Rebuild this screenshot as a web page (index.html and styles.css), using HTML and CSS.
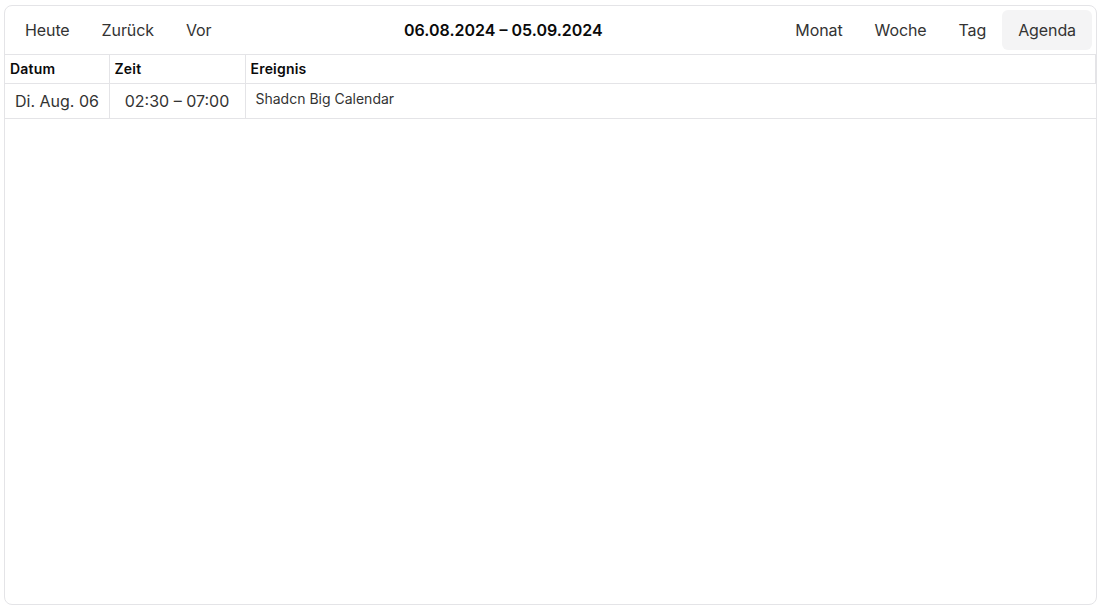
FILE: index.html
```html
<!DOCTYPE html>
<html lang="de">
<head>
<meta charset="utf-8">
<title>Agenda</title>
<link rel="stylesheet" href="styles.css">
</head>
<body>
<div class="page">
  <div class="calendar">
    <div class="toolbar">
      <div class="btn-group">
        <button class="btn">Heute</button>
        <button class="btn">Zurück</button>
        <button class="btn">Vor</button>
      </div>
      <div class="label">06.08.2024 – 05.09.2024</div>
      <div class="btn-group">
        <button class="btn">Monat</button>
        <button class="btn">Woche</button>
        <button class="btn">Tag</button>
        <button class="btn active">Agenda</button>
      </div>
    </div>
    <table class="agenda">
      <thead>
        <tr>
          <th class="col-date">Datum</th>
          <th class="col-time">Zeit</th>
          <th class="col-event">Ereignis</th>
        </tr>
      </thead>
      <tbody>
        <tr>
          <td class="cell-date">Di. Aug. 06</td>
          <td class="cell-time">02:30 – 07:00</td>
          <td class="cell-event">Shadcn Big Calendar</td>
        </tr>
      </tbody>
    </table>
  </div>
</div>
</body>
</html>
```

FILE: styles.css
```css
* { box-sizing: border-box; }
html, body { margin: 0; padding: 0; background: #ffffff; }
body {
  font-family: Inter, "Noto Sans", sans-serif;
  color: #333333;
}
.page {
  padding: 5px 5px 4px 4px;
}
.calendar {
  width: 1093px;
  height: 600px;
  border: 1px solid #e4e4e7;
  border-radius: 8px;
  background: #ffffff;
  display: flex;
  flex-direction: column;
  overflow: hidden;
}
.toolbar {
  display: flex;
  align-items: center;
  padding: 4px;
  border-bottom: 1px solid #e4e4e7;
}
.btn-group {
  display: flex;
}
.btn {
  font-family: inherit;
  font-size: 16px;
  letter-spacing: -0.1px;
  color: #333333;
  background: transparent;
  border: none;
  height: 40px;
  padding: 0 16px;
  border-radius: 6px;
  cursor: pointer;
}
.btn.active {
  background: #f4f4f5;
}
.label {
  flex: 1;
  text-align: center;
  font-size: 16px;
  font-weight: 600;
  color: #0a0a0a;
}
.agenda {
  width: 100%;
  border-collapse: collapse;
  table-layout: fixed;
}
.agenda th {
  text-align: left;
  font-size: 14px;
  font-weight: 600;
  letter-spacing: 0.2px;
  color: #0a0a0a;
  height: 28px;
  padding: 0 5px;
  border-bottom: 1px solid #e4e4e7;
  border-right: 1px solid #e4e4e7;
}
.agenda td {
  height: 35px;
  border-bottom: 1px solid #e4e4e7;
  border-right: 1px solid #e4e4e7;
  padding: 0 10px;
  white-space: nowrap;
}
.agenda td:last-child { border-right: none; }
.col-date { width: 104px; }
.col-time { width: 136px; }
.cell-date, .cell-time {
  font-size: 16px;
  color: #333333;
}
.cell-time { text-align: center; }
.cell-event {
  font-size: 14px;
  color: #333333;
  vertical-align: top;
  padding-top: 6px !important;
}
```
